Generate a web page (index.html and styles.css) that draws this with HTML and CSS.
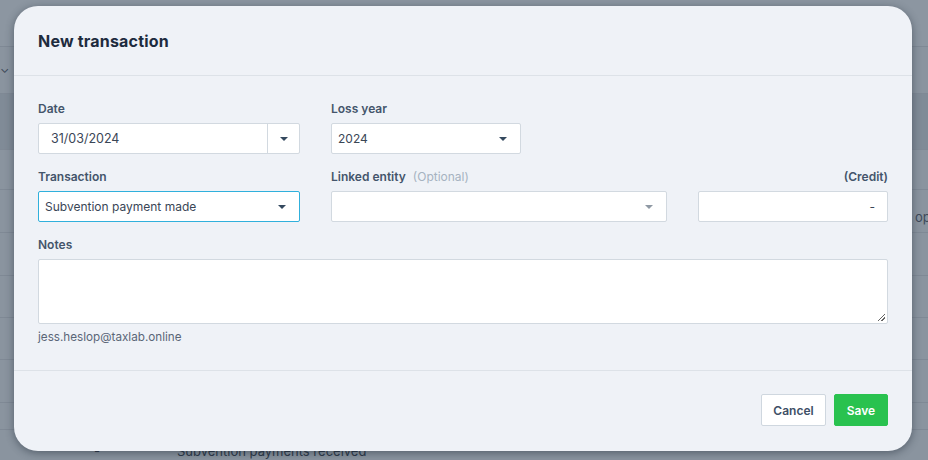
FILE: index.html
```html
<!DOCTYPE html>
<html>
<head>
<meta charset="utf-8">
<link rel="stylesheet" href="styles.css">
</head>
<body>
<div class="backdrop">
  <div class="bg-row r1"></div>
  <div class="bg-row r2"><span class="chev">&#8964;</span></div>
  <div class="bg-row r3 dark"></div>
  <div class="bg-row r4"></div>
  <div class="bg-row r5"><span class="bg-right">op</span></div>
  <div class="bg-row r6"></div>
  <div class="bg-row r7"></div>
  <div class="bg-row r8"></div>
  <div class="bg-row r9"></div>
  <div class="bg-row r10"></div>
  <div class="bg-row r11"><span class="bg-dash">-</span><span class="bg-text">Subvention payments received</span></div>
</div>

<div class="modal">
  <div class="modal-header">New transaction</div>
  <div class="modal-body">
    <div class="grid">
      <div class="field">
        <label class="label">Date</label>
        <div class="input date">
          <span class="value">31/03/2024</span>
          <span class="date-btn"><span class="caret"></span></span>
        </div>
      </div>
      <div class="field">
        <label class="label">Loss year</label>
        <div class="input select narrow">
          <span class="value">2024</span>
          <span class="caret"></span>
        </div>
      </div>
      <div class="field"></div>

      <div class="field">
        <label class="label">Transaction</label>
        <div class="input select focused">
          <span class="value">Subvention payment made</span>
          <span class="caret"></span>
        </div>
      </div>
      <div class="field">
        <label class="label">Linked entity <span class="optional">(Optional)</span></label>
        <div class="input select">
          <span class="value"></span>
          <span class="caret light"></span>
        </div>
      </div>
      <div class="field">
        <label class="label right">(Credit)</label>
        <div class="input amount">
          <span class="value">-</span>
        </div>
      </div>
    </div>

    <div class="field notes">
      <label class="label">Notes</label>
      <div class="textarea"><span class="grip"></span></div>
    </div>
    <div class="email">jess.heslop@taxlab.online</div>
  </div>
  <div class="modal-footer">
    <button class="btn cancel">Cancel</button>
    <button class="btn save">Save</button>
  </div>
</div>
</body>
</html>
```

FILE: styles.css
```css
* { box-sizing: border-box; }
html, body { margin: 0; padding: 0; }
body {
  width: 928px;
  height: 460px;
  overflow: hidden;
  background: #8a949f;
  font-family: Inter, "Open Sans", "Liberation Sans", sans-serif;
  position: relative;
}

.backdrop { display: flex; flex-direction: column; }
.bg-row {
  border-bottom: 1px solid #7f8995;
  position: relative;
  flex: none;
}
.r1 { height: 47px; background: #8c96a1; }
.r2 { height: 47px; }
.r3 { height: 56px; }
.dark { background: #808b97; }
.r4 { height: 40px; }
.r5 { height: 43px; }
.r6 { height: 43px; }
.r7 { height: 42px; }
.r8 { height: 42px; }
.r9 { height: 43px; }
.r10 { height: 27px; }
.r11 { height: 40px; border-bottom: none; }
.chev { position: absolute; left: 0; top: 14px; color: #3e4a5a; font-size: 12px; }
.bg-right { position: absolute; left: 915px; top: 19px; color: #3e4a5a; font-size: 13px; }
.bg-dash { position: absolute; left: 94px; top: 13px; color: #2e3a4a; font-size: 13px; }
.bg-text { position: absolute; left: 177px; top: 13px; color: #2e3a4a; font-size: 13px; }

.modal {
  position: absolute;
  left: 14px;
  top: 6px;
  width: 898px;
  height: 445px;
  background: #eff2f7;
  border-radius: 24px;
  box-shadow: 0 2px 8px rgba(20, 30, 45, 0.45);
  display: flex;
  flex-direction: column;
}
.modal-header {
  height: 70px;
  padding: 25px 24px 0;
  font-size: 16px;
  font-weight: 700;
  color: #1d2b3e;
  border-bottom: 1px solid #dde2e8;
  letter-spacing: 0.2px;
}
.modal-body {
  padding: 24px 24px 0;
  height: 295px;
  border-bottom: 1px solid #dde2e8;
}
.grid {
  display: grid;
  grid-template-columns: 262px 336px 190px;
  column-gap: 31px;
  row-gap: 14px;
}
.field { display: flex; flex-direction: column; }
.label {
  font-size: 12px;
  font-weight: 600;
  color: #44556b;
  height: 23px;
  padding-top: 2px;
  line-height: 14px;
}
.label.right { text-align: right; }
.optional { color: #a6b3c1; font-weight: 400; margin-left: 4px; }

.input {
  height: 31px;
  background: #fff;
  border: 1px solid #d2d9e0;
  border-radius: 2px;
  display: flex;
  align-items: center;
  font-size: 12px;
  color: #3a4656;
}
.value { flex: 1; padding-left: 12px; }
.select .value { padding-left: 6px; }
.select { padding-right: 13px; }
.narrow { width: 190px; }
.focused { border-color: #30b0dc; }
.date .value { padding-left: 12px; font-size: 12.5px; }
.date-btn {
  width: 32px;
  height: 100%;
  border-left: 1px solid #d2d9e0;
  display: flex;
  align-items: center;
  justify-content: center;
}
.caret {
  width: 0; height: 0;
  border-left: 4px solid transparent;
  border-right: 4px solid transparent;
  border-top: 4px solid #34495e;
}
.caret.light { border-top-color: #8f99a4; }
.amount .value { text-align: right; padding-right: 12px; }

.notes { margin-top: 14px; }
.textarea {
  height: 65px;
  background: #fff;
  border: 1px solid #d2d9e0;
  border-radius: 2px;
  position: relative;
}
.grip {
  position: absolute;
  right: 2px;
  bottom: 2px;
  width: 7px;
  height: 7px;
  background: linear-gradient(135deg, transparent 45%, #666 45%, #666 55%, transparent 55%, transparent 70%, #666 70%, #666 80%, transparent 80%);
}
.email {
  margin-top: 6px;
  font-size: 11.7px;
  color: #5a6677;
}

.modal-footer {
  display: flex;
  justify-content: flex-end;
  gap: 8px;
  padding: 23px 24px 0;
}
.btn {
  height: 32px;
  border-radius: 2px;
  font-family: inherit;
  font-size: 12px;
  font-weight: 600;
  cursor: pointer;
}
.cancel {
  width: 65px;
  background: #fff;
  border: 1px solid #cfd7df;
  color: #3e4f66;
}
.save {
  width: 54px;
  background: #29c24f;
  border: 1px solid #29c24f;
  color: #fff;
}
```
